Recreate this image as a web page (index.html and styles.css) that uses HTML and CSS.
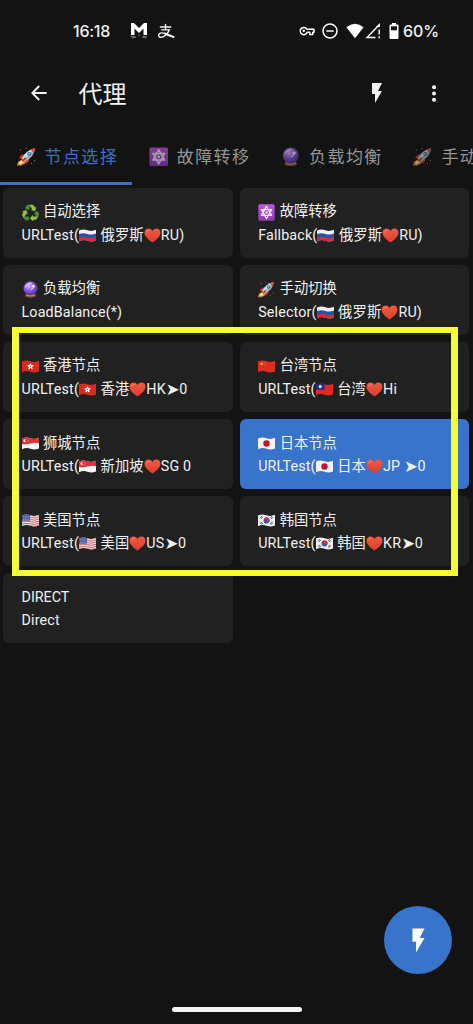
FILE: index.html
```html
<!DOCTYPE html>
<html lang="zh-CN">
<head>
<meta charset="utf-8">
<meta name="viewport" content="width=device-width, initial-scale=1">
<title>代理</title>
<link rel="stylesheet" href="styles.css">
</head>
<body>
<svg class="defs" aria-hidden="true">
  <defs>
    <radialGradient id="orb" cx=".4" cy=".35" r=".65"><stop offset="0" stop-color="#d9b5ff"/><stop offset=".45" stop-color="#9361dc"/><stop offset="1" stop-color="#4c369f"/></radialGradient>
    <linearGradient id="heartfill" x1="0" y1="0" x2="0" y2="1"><stop offset="0" stop-color="#f15a43"/><stop offset="1" stop-color="#dc3d2b"/></linearGradient>
    <linearGradient id="violet" x1="0" y1="0" x2="0" y2="1"><stop offset="0" stop-color="#bd5bda"/><stop offset="1" stop-color="#8e38bd"/></linearGradient>
    <clipPath id="wave"><path d="M0 4Q5 2 10 3.8T20 3.2V15.8Q15 18 10 16.2T0 16.8Z"/></clipPath>
  </defs>
  <symbol id="rocket" viewBox="0 0 20 20">
    <path d="M2 11L5 7.8l5 .2-4 5zM9 17.5l3.3-3 .2-5.2-5 4z" fill="#c83d32"/>
    <path d="M6 12.2L1.2 15 0 19.4 3.2 18l-.7 1.6 5.3-2.4.8-3z" fill="#f59b31"/>
    <path d="M5.7 13.3L2.7 15.5 2 18l3-1.3 2.3-2.2z" fill="#ffe9a0"/>
    <path d="M5.2 11.5Q9 3.6 18.5 1.2 18 9.6 8.2 15z" fill="#9ab3c0"/>
    <path d="M5.2 11.5Q9 3.6 18.5 1.2L6.7 13.4z" fill="#c9dae1"/>
    <path d="M14 2.7Q16 1.6 18.7 1q-.4 3-1.7 5.2z" fill="#e14a3d"/>
    <circle cx="12.6" cy="7" r="2" fill="#36657a"/><circle cx="12.5" cy="6.8" r="1" fill="#86d5ec"/>
    <path d="M8.8 11.2l-3.2 3.6" stroke="#bd332e" stroke-width="1.8"/>
    <path d="M3 3h1M9 1.5h.9M17.5 14h1M14.5 17h.8" stroke="#c3a87d" stroke-width=".9"/>
  </symbol>
  <symbol id="star" viewBox="0 0 20 20">
    <rect x=".4" y=".4" width="19.2" height="19.2" rx="1.8" fill="url(#violet)"/>
    <path d="M10 2.8l6 10.6H4zM10 17.2L4 6.6h12z" fill="none" stroke="#f4e8f8" stroke-width="1.5" stroke-linejoin="round"/>
    <circle cx="10" cy="10" r="1.4" fill="#f4e8f8"/>
  </symbol>
  <symbol id="crystal" viewBox="0 0 20 20">
    <path d="M5 14h10l1.5 4.3Q10 21 3.5 18.3z" fill="#80543f"/><path d="M4.6 16.5Q10 18.6 15.4 16.5" fill="none" stroke="#c39266" stroke-width="1.1"/>
    <circle cx="10" cy="8.6" r="8.2" fill="url(#orb)"/>
    <path d="M4 7q2.5-4.5 7-4M11 10l4-4" fill="none" stroke="#e9d6ff" stroke-width="1.2" stroke-linecap="round"/><circle cx="13" cy="6" r="1.6" fill="#eee2ff"/>
  </symbol>
  <symbol id="recycle" viewBox="0 0 20 20">
    <g fill="#8bc34a">
      <path d="M7.200 1h5.200q1 0 1.600 1l1.300 2.200 1.700-1-1.500 5.300-5.300-1.300 1.700-1-2-3.500z"/>
      <path d="M7.200 1h5.200q1 0 1.600 1l1.300 2.200 1.700-1-1.500 5.300-5.300-1.300 1.700-1-2-3.500z" transform="rotate(120 10 10.800)"/>
      <path d="M7.200 1h5.200q1 0 1.600 1l1.300 2.200 1.700-1-1.500 5.300-5.300-1.300 1.700-1-2-3.500z" transform="rotate(240 10 10.800)"/>
    </g>
    <g fill="#4b8f35">
      <path d="M7 1.100q1.600.2 2.700 2.300L7.600 7.300 3.600 5l2-3.300q.5-.7 1.400-.6z"/>
      <path d="M7 1.100q1.600.2 2.700 2.300L7.600 7.300 3.600 5l2-3.300q.5-.7 1.400-.6z" transform="rotate(120 10 10.800)"/>
      <path d="M7 1.100q1.600.2 2.700 2.300L7.600 7.300 3.600 5l2-3.300q.5-.7 1.400-.6z" transform="rotate(240 10 10.800)"/>
    </g>
  </symbol>
  <symbol id="heart" viewBox="0 0 20 20"><path d="M10 18.3C4 14 .6 10.6.6 6.8.6 1.3 7.3.2 10 4.6 12.7.2 19.4 1.3 19.4 6.8c0 3.8-3.4 7.2-9.4 11.5z" fill="url(#heartfill)"/><path d="M3 6q.8-2.2 3-2.1" fill="none" stroke="#ff846b" stroke-width="1.1" stroke-linecap="round"/></symbol>
  <symbol id="ru" viewBox="0 0 20 20"><g clip-path="url(#wave)"><path fill="#f2f2f2" d="M0 0h20v20H0z"/><path d="M0 8.2Q5 6.6 10 8.1T20 7.5V20H0z" fill="#2451b3"/><path d="M0 12.7Q5 11 10 12.4T20 11.8V20H0z" fill="#da2d2b"/></g></symbol>
  <symbol id="hk" viewBox="0 0 20 20"><g clip-path="url(#wave)"><path fill="#d92b1e" d="M0 0h20v20H0z"/><g fill="#fff"><ellipse cx="10" cy="8" rx="1" ry="1.800"/><ellipse cx="10" cy="8" rx="1" ry="1.800" transform="rotate(72 10 10)"/><ellipse cx="10" cy="8" rx="1" ry="1.800" transform="rotate(144 10 10)"/><ellipse cx="10" cy="8" rx="1" ry="1.800" transform="rotate(216 10 10)"/><ellipse cx="10" cy="8" rx="1" ry="1.800" transform="rotate(288 10 10)"/></g><circle cx="10" cy="10" r=".7" fill="#d92b1e"/></g></symbol>
  <symbol id="cn" viewBox="0 0 20 20"><g clip-path="url(#wave)"><path fill="#de2d1c" d="M0 0h20v20H0z"/><path d="M4.300 4.600l.6 1.500h1.600l-1.300 1 .5 1.600-1.400-1-1.400 1 .5-1.600-1.300-1h1.600z" fill="#ffd633"/><path d="M7.600 4.900h.8M9 6.300h.8M9 8h.8M7.600 9.300h.8" stroke="#f5a52e" stroke-width=".8"/></g></symbol>
  <symbol id="tw" viewBox="0 0 20 20"><g clip-path="url(#wave)"><path fill="#e12822" d="M0 0h20v20H0z"/><path fill="#172c9c" d="M0 0h10v10H0z"/><circle cx="5" cy="6.5" r="1.8" fill="#fff"/></g></symbol>
  <symbol id="sg" viewBox="0 0 20 20"><g clip-path="url(#wave)"><path fill="#f4f4f4" d="M0 0h20v20H0z"/><path d="M0 0h20v9.6Q15 8.6 10 10T0 10.5z" fill="#df303c"/><path d="M4.400 4.600q-2 2 0 4-2.800 0-2.800-2 0-2 2.800-2z" fill="#fff"/><path d="M5.600 5.400h.7M7 6.500h.7M5.200 7.800h.7M6.700 8.200h.7" stroke="#fff" stroke-width=".6"/></g></symbol>
  <symbol id="us" viewBox="0 0 20 20"><g clip-path="url(#wave)"><path fill="#ececef" d="M0 0h20v20H0z"/><path d="M0 4.2Q5 2.4 10 4t10-.6M0 6.7Q5 5 10 6.5t10-.6M0 9.2Q5 7.5 10 9t10-.6M0 11.7Q5 10 10 11.5t10-.6M0 14.2Q5 12.5 10 14t10-.6M0 16.5Q5 14.8 10 16.3t10-.6" fill="none" stroke="#d15059" stroke-width="1.1"/><path fill="#4554a0" d="M0 0h9.5v10.4H0z"/><path d="M1.3 5h7M2 7h6.5M1.3 9h7" stroke="#d0d5ef" stroke-width=".8" stroke-dasharray="1 1"/></g></symbol>
  <symbol id="jp" viewBox="0 0 20 20"><g clip-path="url(#wave)"><path fill="#f3f3f3" d="M0 0h20v20H0z"/><circle cx="10" cy="10" r="3.8" fill="#bd192d"/></g></symbol>
  <symbol id="kr" viewBox="0 0 20 20"><g clip-path="url(#wave)"><path fill="#f1f1f3" d="M0 0h20v20H0z"/><circle cx="10" cy="10" r="3.5" fill="#315a9f"/><path d="M6.8 8.5A3.5 3.5 0 0 1 13.4 11Q11.7 12 10.1 10T6.8 8.5z" fill="#cf3547"/><path d="M2.4 7.4l2.1-2.6M3.6 8.2l2-2.5M15.5 4.8l2 2.5M14.3 5.7l2 2.5M2.4 12.3l2.2 2.8M3.7 11.5l2.1 2.8M17.5 12.3l-2.1 2.8M16.3 11.5l-2.1 2.8" stroke="#333" stroke-width=".85"/></g></symbol>
  <symbol id="bolt" viewBox="0 0 24 24"><path d="M7 2v11h3v9l7-12h-4l4-8z" fill="currentColor"/></symbol>
</svg>

<div class="screen">
  <header class="status">
    <span class="clock">16:18</span>
    <svg class="mail" viewBox="0 0 18 18"><path d="M1 13V1h3l5 5 5-5h3v12h-3.500V6.500L9 11 4.500 6.500V13z" fill="#fff"/><path d="M1 15q3-1 4.500 0-2 0-3.500 1.500M17 15q-3-1-4.500 0 2 0 3.500 1.500" fill="none" stroke="#999" stroke-width=".9"/><circle cx="9" cy="13.500" r=".7" fill="#999"/></svg>
    <svg class="pay" viewBox="0 0 18 18" fill="none" stroke="#f5f5f5" stroke-linecap="round"><path d="M3 4.300h11M8.500 1.500v5.300M4.500 7.300h8Q11 11 8 13.300q-3 2.600-5.800 1.600Q.2 13.300 2 11.300q2-1.700 6-.1" stroke-width="1.500"/><path d="M8 11.200q4 2 9 3.600" stroke-width="2.300"/></svg>
    <span class="status-space"></span>
    <svg class="key" viewBox="0 0 16 12"><path d="M8 4.300h7v3h-1.200v2.200h-3V7.300H8.200A3.600 3.600 0 1 1 8 4.300z" fill="none" stroke="#fff" stroke-width="1.500" stroke-linejoin="round"/><circle cx="4.800" cy="5.800" r="1.200" fill="#fff"/></svg>
    <svg class="dnd" viewBox="0 0 16 16" fill="none" stroke="#fff" stroke-width="1.500"><circle cx="8" cy="8" r="7"/><path d="M4.300 8h7.400"/></svg>
    <svg class="wifi" viewBox="0 0 18 16"><path d="M.4 4.300Q9-2.700 17.600 4.300L9 15.300z" fill="#fff"/></svg>
    <svg class="signal" viewBox="0 0 16 16"><path d="M10.500 14.500H2L14 2" fill="none" stroke="#fff" stroke-width="1.400"/><path d="M11 4L15 0v4z" fill="#fff"/><path d="M14.200 6.500v5M14.200 13.300v2" stroke="#fff" stroke-width="1.400"/></svg>
    <svg class="battery" viewBox="0 0 10 16"><path d="M3 0h4v1.500h1.500q1 0 1 1V15q0 1-1 1h-7q-1 0-1-1V2.500q0-1 1-1H3z" fill="#fff"/><path d="M2 3.300h6v4H2z" fill="#171717"/></svg>
    <span class="percent">60%</span>
  </header>

  <div class="toolbar">
    <svg class="back" viewBox="0 0 16 16" fill="none" stroke="#f4f4f4" stroke-width="1.900"><path d="M15.700 8H1.700M8.200 1L1.300 8l6.900 7"/></svg>
    <h1 class="title">代理</h1>
    <svg class="tool-bolt"><use href="#bolt"/></svg>
    <svg class="more" viewBox="0 0 4 17" fill="#f4f4f4"><circle cx="2" cy="2.200" r="2"/><circle cx="2" cy="8.500" r="2"/><circle cx="2" cy="14.800" r="2"/></svg>
  </div>

  <nav class="tabs">
    <div class="tab active"><svg class="emoji"><use href="#rocket"/></svg><span>节点选择</span></div>
    <div class="tab"><svg class="emoji"><use href="#star"/></svg><span>故障转移</span></div>
    <div class="tab"><svg class="emoji"><use href="#crystal"/></svg><span>负载均衡</span></div>
    <div class="tab"><svg class="emoji"><use href="#rocket"/></svg><span>手动</span></div>
  </nav>

  <main class="grid">
    <div class="card"><div class="line"><svg class="emoji"><use href="#recycle"/></svg><span class="gap">自动选择</span></div><div class="line detail"><span>URLTest(</span><svg class="emoji"><use href="#ru"/></svg><span class="gap">俄罗斯</span><svg class="emoji"><use href="#heart"/></svg><span>RU)</span></div></div>
    <div class="card"><div class="line"><svg class="emoji"><use href="#star"/></svg><span class="gap">故障转移</span></div><div class="line detail"><span>Fallback(</span><svg class="emoji"><use href="#ru"/></svg><span class="gap">俄罗斯</span><svg class="emoji"><use href="#heart"/></svg><span>RU)</span></div></div>
    <div class="card"><div class="line"><svg class="emoji"><use href="#crystal"/></svg><span class="gap">负载均衡</span></div><div class="line detail"><span>LoadBalance(*)</span></div></div>
    <div class="card"><div class="line"><svg class="emoji"><use href="#rocket"/></svg><span class="gap">手动切换</span></div><div class="line detail"><span>Selector(</span><svg class="emoji"><use href="#ru"/></svg><span class="gap">俄罗斯</span><svg class="emoji"><use href="#heart"/></svg><span>RU)</span></div></div>
    <div class="card"><div class="line"><svg class="emoji"><use href="#hk"/></svg><span class="gap">香港节点</span></div><div class="line detail"><span>URLTest(</span><svg class="emoji"><use href="#hk"/></svg><span class="gap">香港</span><svg class="emoji"><use href="#heart"/></svg><span>HK</span><span class="arrow">➤</span><span>0</span></div></div>
    <div class="card"><div class="line"><svg class="emoji"><use href="#cn"/></svg><span class="gap">台湾节点</span></div><div class="line detail"><span>URLTest(</span><svg class="emoji"><use href="#tw"/></svg><span class="gap">台湾</span><svg class="emoji"><use href="#heart"/></svg><span>Hi</span></div></div>
    <div class="card"><div class="line"><svg class="emoji"><use href="#sg"/></svg><span class="gap">狮城节点</span></div><div class="line detail"><span>URLTest(</span><svg class="emoji"><use href="#sg"/></svg><span class="gap">新加坡</span><svg class="emoji"><use href="#heart"/></svg><span>SG 0</span></div></div>
    <div class="card selected"><div class="line"><svg class="emoji"><use href="#jp"/></svg><span class="gap">日本节点</span></div><div class="line detail"><span>URLTest(</span><svg class="emoji"><use href="#jp"/></svg><span class="gap">日本</span><svg class="emoji"><use href="#heart"/></svg><span>JP </span><span class="arrow">➤</span><span>0</span></div></div>
    <div class="card"><div class="line"><svg class="emoji"><use href="#us"/></svg><span class="gap">美国节点</span></div><div class="line detail"><span>URLTest(</span><svg class="emoji"><use href="#us"/></svg><span class="gap">美国</span><svg class="emoji"><use href="#heart"/></svg><span>US</span><span class="arrow">➤</span><span>0</span></div></div>
    <div class="card"><div class="line"><svg class="emoji"><use href="#kr"/></svg><span class="gap">韩国节点</span></div><div class="line detail"><span>URLTest(</span><svg class="emoji"><use href="#kr"/></svg><span class="gap">韩国</span><svg class="emoji"><use href="#heart"/></svg><span>KR</span><span class="arrow">➤</span><span>0</span></div></div>
    <div class="card"><div class="line">DIRECT</div><div class="line detail">Direct</div></div>
  </main>

  <footer class="home"><span class="pill"></span></footer>
  <div class="highlight"></div>
  <div class="fab"><svg class="fab-bolt"><use href="#bolt"/></svg></div>
</div>
</body>
</html>
```
FILE: styles.css
```css
* { box-sizing: border-box; }
body { margin: 0; background: #131313; }
svg { display: block; flex: none; }
.defs { position: absolute; width: 0; height: 0; }
.screen {
  position: relative;
  display: flex;
  flex-direction: column;
  width: 473px;
  height: 1024px;
  overflow: hidden;
  background: #131313;
  color: #f1f1f1;
  font-family: Roboto, "Noto Sans CJK SC", sans-serif;
}

.status { display: flex; align-items: center; height: 62px; padding: 0 34px 0 73px; font-family: Inter, sans-serif; }
.clock { width: 38px; font-size: 16px; font-weight: 500; letter-spacing: -.25px; white-space: nowrap; }
.mail { width: 18px; height: 18px; margin-left: 19px; }
.pay { width: 18px; height: 17px; margin-left: 9px; }
.status-space { flex: 1; }
.key { width: 16px; height: 12px; }
.dnd { width: 16px; height: 16px; margin-left: 7px; }
.wifi { width: 18px; height: 16px; margin-left: 8px; }
.signal { width: 16px; height: 16px; margin-left: 1px; }
.battery { width: 10px; height: 16px; margin-left: 8px; }
.percent { width: 36px; margin-left: 4px; font-size: 16px; font-weight: 500; letter-spacing: -.1px; white-space: nowrap; }

.toolbar { display: flex; align-items: center; height: 62px; padding: 0 37.500px 0 31px; }
.back { width: 16px; height: 16px; }
.title { flex: 1; margin: 0 0 0 31.500px; padding-top: 3px; font-size: 24px; line-height: 32px; font-weight: 400; }
.tool-bolt { width: 24px; height: 24px; margin-right: 43px; }
.more { width: 4px; height: 17px; }

.tabs { display: flex; height: 61px; overflow: hidden; }
.tab {
  display: flex;
  flex: 0 0 132.300px;
  align-items: center;
  gap: 8.500px;
  padding: 5px 0 0 16.500px;
  border-bottom: 3px solid transparent;
  color: #959595;
  font-size: 17px;
  letter-spacing: 1.400px;
  white-space: nowrap;
}
.tab .emoji { width: 19.500px; height: 19.500px; margin-top: 2px; opacity: .65; }
.tab.active { border-color: #3f74bd; color: #3b6fc2; }
.tab.active .emoji { opacity: 1; }

.grid {
  display: grid;
  grid-template-columns: 230px 229.500px;
  grid-auto-rows: 70px;
  gap: 7.100px 6.700px;
  margin: 3px 0 0 3px;
}
.card { padding: 12.300px 0 0 18.500px; border-radius: 6px; background: #212121; }
.card.selected { background: #3873cc; }
.line { display: flex; align-items: center; height: 23.500px; font-size: 14.300px; line-height: 23.500px; white-space: pre; }
.line .emoji { width: 17px; height: 17px; }
.detail { letter-spacing: .15px; }
.detail .emoji { margin-top: -1px; }
.gap { margin-left: 4.500px; }
.arrow { width: 13.500px; font-family: "DejaVu Sans", sans-serif; font-size: 16.500px; letter-spacing: 0; }

.home { display: flex; justify-content: center; align-items: flex-end; flex: 1; padding-bottom: 12px; }
.pill { width: 130px; height: 5px; border-radius: 3px; background: #f4f4f4; }
.highlight { position: absolute; left: 12px; top: 327px; width: 446px; height: 249px; border: 6.500px solid #f4fc32; border-width: 6px 7px; }
.fab {
  position: absolute;
  left: 384px;
  top: 906px;
  display: flex;
  align-items: center;
  justify-content: center;
  width: 68px;
  height: 68px;
  border-radius: 50%;
  background: #3873cc;
  color: #fff;
}
.fab-bolt { width: 29px; height: 29px; }
```
